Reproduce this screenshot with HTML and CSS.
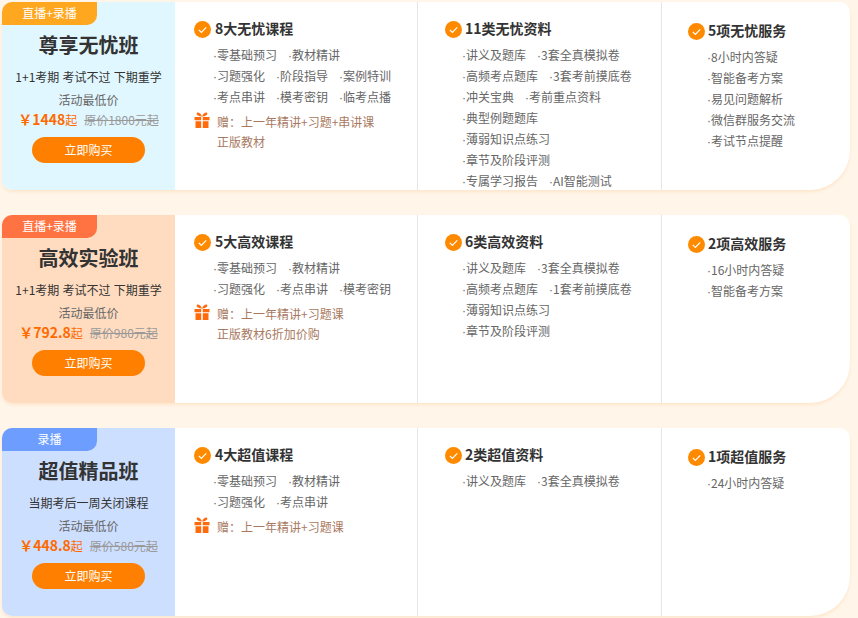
FILE: index.html
```html
<!DOCTYPE html>
<html lang="zh">
<head>
<meta charset="utf-8">
<title>班型对比</title>
<link rel="stylesheet" href="styles.css">
</head>
<body>
<svg class="defs" width="0" height="0">
  <symbol id="check" viewBox="0 0 17 17"><circle cx="8.5" cy="8.5" r="8.5" fill="#ff8a00"/><path d="M4.8 8.8l2.6 2.6 4.8-5" fill="none" stroke="#fff" stroke-width="1.2"/></symbol>
  <symbol id="gift" viewBox="0 0 16 16"><path fill="#ff6a0d" d="M.5 5h6.700v3.200H.5zM8.800 5H15.500v3.200H8.800zM1.500 9.200h5.700V16H1.500zM8.800 9.200H14.500V16H8.800z"/><path fill="#ff6a0d" d="M8 4.600C6.800 1 4 -.3 3 .8 1.900 2.100 3.500 4.300 8 4.600zM8 4.600C9.200 1 12 -.3 13 .8 14.100 2.100 12.500 4.300 8 4.600z"/></symbol>
</svg>
<main class="page">

<section class="card">
  <div class="side side-blue">
    <div class="tag tag-amber">直播+录播</div>
    <h2>尊享无忧班</h2>
    <p class="sub">1+1考期 考试不过 下期重学</p>
    <p class="low">活动最低价</p>
    <p class="price"><b>￥1448</b><i>起</i><s>原价1800元起</s></p>
    <a class="buy">立即购买</a>
  </div>
  <div class="col c1">
    <h3><svg class="ck"><use href="#check"/></svg>8大无忧课程</h3>
    <ul><li><span>零基础预习</span><span>教材精讲</span></li><li><span>习题强化</span><span>阶段指导</span><span>案例特训</span></li><li><span>考点串讲</span><span>模考密钥</span><span>临考点播</span></li></ul>
    <div class="gift"><svg class="gf"><use href="#gift"/></svg><p>赠：上一年精讲+习题+串讲课<br>正版教材</p></div>
  </div>
  <div class="col c2">
    <h3><svg class="ck"><use href="#check"/></svg>11类无忧资料</h3>
    <ul><li><span>讲义及题库</span><span>3套全真模拟卷</span></li><li><span>高频考点题库</span><span>3套考前摸底卷</span></li><li><span>冲关宝典</span><span>考前重点资料</span></li><li><span>典型例题题库</span></li><li><span>薄弱知识点练习</span></li><li><span>章节及阶段评测</span></li><li><span>专属学习报告</span><span>AI智能测试</span></li></ul>
  </div>
  <div class="col c3">
    <h3><svg class="ck"><use href="#check"/></svg>5项无忧服务</h3>
    <ul><li><span>8小时内答疑</span></li><li><span>智能备考方案</span></li><li><span>易见问题解析</span></li><li><span>微信群服务交流</span></li><li><span>考试节点提醒</span></li></ul>
  </div>
</section>

<section class="card">
  <div class="side side-peach">
    <div class="tag tag-coral">直播+录播</div>
    <h2>高效实验班</h2>
    <p class="sub">1+1考期 考试不过 下期重学</p>
    <p class="low">活动最低价</p>
    <p class="price"><b>￥792.8</b><i>起</i><s>原价980元起</s></p>
    <a class="buy">立即购买</a>
  </div>
  <div class="col c1">
    <h3><svg class="ck"><use href="#check"/></svg>5大高效课程</h3>
    <ul><li><span>零基础预习</span><span>教材精讲</span></li><li><span>习题强化</span><span>考点串讲</span><span>模考密钥</span></li></ul>
    <div class="gift"><svg class="gf"><use href="#gift"/></svg><p>赠：上一年精讲+习题课<br>正版教材6折加价购</p></div>
  </div>
  <div class="col c2">
    <h3><svg class="ck"><use href="#check"/></svg>6类高效资料</h3>
    <ul><li><span>讲义及题库</span><span>3套全真模拟卷</span></li><li><span>高频考点题库</span><span>1套考前摸底卷</span></li><li><span>薄弱知识点练习</span></li><li><span>章节及阶段评测</span></li></ul>
  </div>
  <div class="col c3">
    <h3><svg class="ck"><use href="#check"/></svg>2项高效服务</h3>
    <ul><li><span>16小时内答疑</span></li><li><span>智能备考方案</span></li></ul>
  </div>
</section>

<section class="card">
  <div class="side side-sky">
    <div class="tag tag-blue">录播</div>
    <h2>超值精品班</h2>
    <p class="sub">当期考后一周关闭课程</p>
    <p class="low">活动最低价</p>
    <p class="price"><b>￥448.8</b><i>起</i><s>原价580元起</s></p>
    <a class="buy">立即购买</a>
  </div>
  <div class="col c1">
    <h3><svg class="ck"><use href="#check"/></svg>4大超值课程</h3>
    <ul><li><span>零基础预习</span><span>教材精讲</span></li><li><span>习题强化</span><span>考点串讲</span></li></ul>
    <div class="gift"><svg class="gf"><use href="#gift"/></svg><p>赠：上一年精讲+习题课</p></div>
  </div>
  <div class="col c2">
    <h3><svg class="ck"><use href="#check"/></svg>2类超值资料</h3>
    <ul><li><span>讲义及题库</span><span>3套全真模拟卷</span></li></ul>
  </div>
  <div class="col c3">
    <h3><svg class="ck"><use href="#check"/></svg>1项超值服务</h3>
    <ul><li><span>24小时内答疑</span></li></ul>
  </div>
</section>

</main>
</body>
</html>
```
FILE: styles.css
```css
* { box-sizing: border-box; margin: 0; padding: 0; }
html, body { height: 100%; }
body {
  background: #fff5e9;
  font-family: "Noto Sans CJK SC", "Noto Sans", sans-serif;
  color: #333;
  overflow: hidden;
}
.defs { display: block; height: 0; }
.page {
  padding: 2px 8px 0 2px;
  display: flex;
  flex-direction: column;
  gap: 25px;
}
.card {
  height: 188px;
  background: #fff;
  display: flex;
  border-radius: 10px 10px 40px 10px;
  box-shadow: 0 2px 3px #ffe6cc;
  overflow: hidden;
}
.side {
  width: 173px;
  flex: none;
  display: flex;
  flex-direction: column;
  align-items: center;
}
.side-blue { background: #e1f7ff; }
.side-peach { background: #ffdcc0; }
.side-sky { background: #cddfff; }
.tag {
  align-self: flex-start;
  width: 95px;
  height: 23px;
  border-radius: 0 0 10px 0;
  color: #fff;
  font-size: 12px;
  line-height: 21px;
  text-align: center;
}
.tag-amber { background: #ffa71f; }
.tag-coral { background: #ff7342; }
.tag-blue { background: #6d9eff; }
h2 {
  font-size: 20px;
  line-height: 28px;
  margin-top: 6px;
  color: #333;
  font-weight: 700;
}
.sub { font-size: 12px; line-height: 18px; margin-top: 9px; color: #333; word-spacing: 0.5px; }
.low { font-size: 12px; line-height: 18px; margin-top: 5px; color: #666; }
.price { display: flex; align-items: baseline; line-height: 20px; white-space: nowrap; }
.price b { font-size: 14px; color: #ff6a00; font-weight: 700; }
.price i { font-style: normal; font-size: 12px; color: #ff6a00; }
.price s { font-size: 12px; color: #999; margin-left: 7px; }
.buy {
  display: block;
  width: 113px;
  height: 26px;
  margin-top: 7px;
  border-radius: 13px;
  background: #ff7f00;
  color: #fff;
  font-size: 12px;
  line-height: 26px;
  text-align: center;
}
.col { padding-top: 18px; }
.c1 { width: 243px; padding-left: 19px; border-right: 1px solid #e6e6e6; }
.c2 { width: 244px; padding-left: 27px; border-right: 1px solid #e6e6e6; }
.c3 { flex: 1; padding-left: 26px; padding-top: 20px; }
h3 {
  display: flex;
  align-items: flex-start;
  gap: 4px;
  height: 18px;
  font-size: 14px;
  line-height: 16px;
  font-weight: 700;
  color: #333;
}
.c2 h3, .c3 h3 { gap: 3px; }
.ck { width: 17px; height: 17px; flex: none; margin-top: 1px; }
ul { list-style: none; margin-top: 6px; padding-left: 19px; }
li { display: flex; height: 21px; font-size: 12px; line-height: 21px; color: #666; white-space: nowrap; }
li span { margin-right: 11px; }
li span::before {
  content: "·";
  display: inline-block;
  width: 4px;
  line-height: 1;
  font-family: "Liberation Sans", sans-serif;
}
.c2 ul { padding-left: 17px; }
.gift { display: flex; gap: 7px; margin-top: 5px; }
.gf { width: 16px; height: 16px; flex: none; }
.gift p { font-size: 12px; line-height: 20px; color: #a9795f; }
```
